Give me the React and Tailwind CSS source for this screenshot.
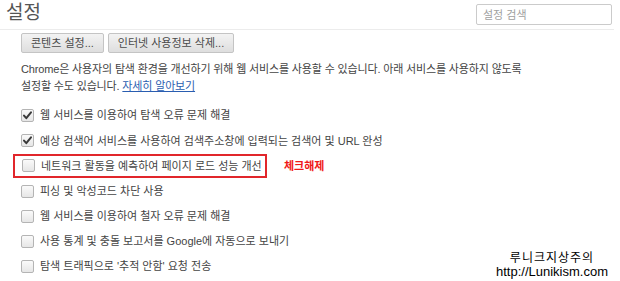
import React from 'react';

const FONT = "font-['Liberation_Sans','Noto_Sans_CJK_KR',sans-serif]";

const options = [
    { label: '웹 서비스를 이용하여 탐색 오류 문제 해결', checked: true },
    { label: '예상 검색어 서비스를 사용하여 검색주소창에 입력되는 검색어 및 URL 완성', checked: true },
    { label: '네트워크 활동을 예측하여 페이지 로드 성능 개선', checked: false, marked: true },
    { label: '피싱 및 악성코드 차단 사용', checked: false },
    { label: '웹 서비스를 이용하여 철자 오류 문제 해결', checked: false },
    { label: '사용 통계 및 충돌 보고서를 Google에 자동으로 보내기', checked: false },
    { label: "탐색 트래픽으로 '추적 안함' 요청 전송", checked: false },
];

const Checkbox = ({ checked }) => (
    <span className="w-[13px] h-[13px] shrink-0 rounded-[2px] border border-[#b4b4b4] bg-gradient-to-b from-[#fafafa] to-[#e6e6e6] flex items-center justify-center">
        {checked && (
            <svg width="11" height="11" viewBox="0 0 11 11">
                <path d="M2 5.6 L4.3 8.2 L9 2.4" fill="none" stroke="#3a3a3a" strokeWidth="2" strokeLinecap="round" strokeLinejoin="round" />
            </svg>
        )}
    </span>
);

const Button = ({ children }) => (
    <button className="h-[20px] px-[9px] rounded-[2px] border border-[#c4c4c4] bg-gradient-to-b from-[#f3f3f3] to-[#dedede] text-[11px] text-[#4a4a4a] leading-none whitespace-nowrap">
        {children}
    </button>
);

const App = () => {
    return (
        <div className={`relative w-[620px] h-[281px] bg-white overflow-hidden text-[#444] ${FONT}`}>
            {/* header */}
            <div className="flex items-start justify-between pl-[6px] pr-[2px] h-[30px] border-b border-[#ececec] mr-[6px]">
                <h1 className="text-[19px] leading-[24px] mt-[1px] text-[#555] font-normal">설정</h1>
                <input
                    type="text"
                    placeholder="설정 검색"
                    className="w-[136px] h-[21px] mt-[4px] px-[6px] border border-[#cbcbcb] rounded-[2px] text-[11px] placeholder-[#a0a0a0] outline-none"
                />
            </div>

            <div className="pl-[21px]">
                <div className="flex gap-[4px] mt-[3px]">
                    <Button>콘텐츠 설정...</Button>
                    <Button>인터넷 사용정보 삭제...</Button>
                </div>

                <p className="mt-[8px] text-[11px] tracking-[-0.15px] leading-[17px] text-[#444]">
                    Chrome은 사용자의 탐색 환경을 개선하기 위해 웹 서비스를 사용할 수 있습니다. 아래 서비스를 사용하지 않도록
                    <br />
                    설정할 수도 있습니다.{' '}
                    <a href="#" className="text-[#2a5db0] underline">자세히 알아보기</a>
                </p>

                <ul className="mt-[8px] flex flex-col">
                    {options.map((opt) =>
                        opt.marked ? (
                            <li key={opt.label} className="h-[25.2px] flex items-center">
                                <div className="flex items-center gap-[6px] ml-[-8px] pl-[7px] w-[254px] h-[24px] border-2 border-[#e1262b]">
                                    <Checkbox checked={opt.checked} />
                                    <span className="text-[11px] whitespace-nowrap">{opt.label}</span>
                                </div>
                                <span className="ml-[17px] text-[11px] font-bold text-[#f01818]">체크해제</span>
                            </li>
                        ) : (
                            <li key={opt.label} className="h-[25.2px] flex items-center gap-[6px]">
                                <Checkbox checked={opt.checked} />
                                <span className="text-[11px] whitespace-nowrap">{opt.label}</span>
                            </li>
                        )
                    )}
                </ul>
            </div>

            {/* watermark */}
            <div className="absolute right-[8px] bottom-[2px] bg-white px-[4px] flex flex-col items-center text-black">
                <div className="text-[12px] leading-[14px] tracking-[1px]">루니크지상주의</div>
                <div className="text-[13px] leading-[14px]">http://Lunikism.com</div>
            </div>
        </div>
    );
};

export default App;
